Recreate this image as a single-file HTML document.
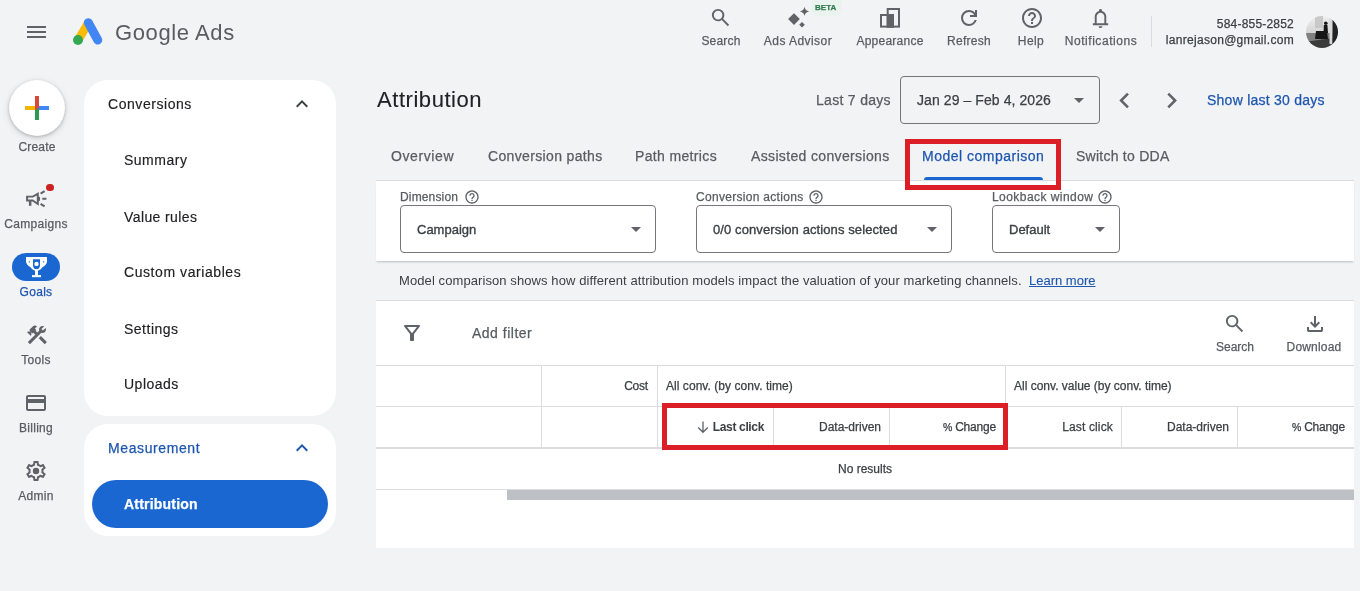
<!DOCTYPE html>
<html><head><meta charset="utf-8">
<style>
*{box-sizing:border-box;margin:0;padding:0}
html,body{width:1360px;height:591px;overflow:hidden;background:#f2f3f5;font-family:"Liberation Sans",sans-serif;}
.a{position:absolute}
.t{position:absolute;white-space:nowrap;line-height:1;will-change:transform;-webkit-text-stroke:.25px currentColor}
.f12{font-size:12px}.f13{font-size:13px}.f14{font-size:14px}.f22{font-size:22px}
.g{color:#585c60}.d{color:#3c4043}.k{color:#202124}.b{color:#1d56ae}
.c{text-align:center}.r{text-align:right}
.hl{position:absolute;background:#dadce0;height:1px}
.vl{position:absolute;background:#dadce0;width:1px}
.box{position:absolute;border:1px solid #79747e;border-radius:4px;background:#fff}
.tri{position:absolute;width:0;height:0;border-left:5px solid transparent;border-right:5px solid transparent;border-top:5px solid #5f6368}
.red{position:absolute;border:5px solid #dc1f26}
svg{position:absolute;overflow:visible}
</style></head><body>

<!-- ===== HEADER ===== -->
<div class="a" style="left:27px;top:26px;width:19px;height:2px;background:#5f6368"></div>
<div class="a" style="left:27px;top:31px;width:19px;height:2px;background:#5f6368"></div>
<div class="a" style="left:27px;top:36px;width:19px;height:2px;background:#5f6368"></div>
<svg style="left:72px;top:17px" width="32" height="29" viewBox="0 0 32 29">
  <line x1="6.5" y1="22.5" x2="16.3" y2="6" stroke="#fbbc04" stroke-width="8.5" stroke-linecap="round"/>
  <line x1="16.3" y1="5.7" x2="25.8" y2="23.1" stroke="#4285f4" stroke-width="9" stroke-linecap="round"/>
  <circle cx="6" cy="23" r="5" fill="#34a853"/>
</svg>
<div class="t f22 g" style="left:115px;top:21.5px;letter-spacing:.6px;-webkit-text-stroke:0">Google Ads</div>

<div class="t f12 g c" style="left:670.8px;top:34.8px;width:100px;letter-spacing:.2px">Search</div>
<div class="t f12 g c" style="left:748.3px;top:34.8px;width:100px;letter-spacing:.45px">Ads Advisor</div>
<div class="t f12 g c" style="left:839.9px;top:34.8px;width:100px;letter-spacing:.25px">Appearance</div>
<div class="t f12 g c" style="left:919.3px;top:34.8px;width:100px;letter-spacing:.25px">Refresh</div>
<div class="t f12 g c" style="left:981.3px;top:34.8px;width:100px;letter-spacing:.4px">Help</div>
<div class="t f12 g c" style="left:1051.3px;top:34.8px;width:100px;letter-spacing:.55px">Notifications</div>
<div class="a" style="left:812px;top:0;width:30px;height:16px;background:#ebf3ee;border-radius:0 0 6px 6px"></div>
<div class="t" style="left:815px;top:4.2px;font-size:8px;font-weight:bold;color:#2f7d4f;letter-spacing:.05px">BETA</div>
<div class="vl" style="left:1151px;top:16px;height:31px"></div>
<!-- header icons -->
<svg style="left:709.1px;top:6.1px" width="23" height="23" viewBox="0 0 24 24"><path fill="#5f6368" d="M19.6 21l-6.3-6.3q-.75.6-1.725.95T9.5 16q-2.725 0-4.612-1.888T3 9.5q0-2.725 1.888-4.612T9.5 3q2.725 0 4.612 1.888T16 9.5q0 1.1-.35 2.075T14.7 13.3l6.3 6.3-1.4 1.4ZM9.5 14q1.875 0 3.188-1.313T14 9.5q0-1.875-1.313-3.188T9.5 5Q7.625 5 6.312 6.313T5 9.5q0 1.875 1.313 3.188T9.5 14Z"/></svg>
<svg style="left:780px;top:0" width="40" height="30" viewBox="0 0 40 30"><path fill="#5f6368" d="M14 13.2L19.85 19 14 24.9 8.1 19Z M22 22l2.85 2.8L22 27.6 19.2 24.8Z M24.5 6.8Q25.1 10.8 29.2 11.4Q25.1 12 24.5 16Q23.9 12 19.8 11.4Q23.9 10.8 24.5 6.8Z"/></svg>
<svg style="left:878px;top:6px" width="24" height="24" viewBox="0 0 24 24"><rect x="3" y="9" width="12" height="11.6" fill="none" stroke="#5f6368" stroke-width="2"/><rect x="9.7" y="3" width="11.3" height="17.6" fill="none" stroke="#5f6368" stroke-width="2"/><rect x="8.7" y="8" width="7.3" height="13.6" fill="#5f6368"/></svg>
<svg style="left:957.4px;top:6px" width="24" height="24" viewBox="0 0 24 24"><path fill="#5f6368" d="M12 20q-3.35 0-5.675-2.325T4 12q0-3.35 2.325-5.675T12 4q1.725 0 3.3.712T18 6.75V4h2v7h-7V9h4.2q-.8-1.4-2.187-2.2T12 6Q9.5 6 7.75 7.75T6 12q0 2.5 1.75 4.25T12 18q1.925 0 3.475-1.1T17.65 14h2.1q-.7 2.65-2.85 4.325T12 20Z"/></svg>
<svg style="left:1019.5px;top:5.8px" width="24" height="24" viewBox="0 0 24 24"><path fill="#5f6368" d="M11 18h2v-2h-2v2zm1-16C6.48 2 2 6.48 2 12s4.48 10 10 10 10-4.48 10-10S17.52 2 12 2zm0 18c-4.41 0-8-3.59-8-8s3.59-8 8-8 8 3.590 8 8-3.59 8-8 8zm0-14c-2.21 0-4 1.79-4 4h2c0-1.1.9-2 2-2s2 .9 2 2c0 2-3 1.75-3 5h2c0-2.25 3-2.5 3-5 0-2.21-1.79-4-4-4z"/></svg>
<svg style="left:1089.2px;top:6.7px" width="23" height="23" viewBox="0 0 24 24"><path fill="#5f6368" d="M4 19v-2h2v-7q0-2.075 1.25-3.687T10.5 4.2v-.7q0-.625.438-1.062T12 2q.625 0 1.063.438T13.5 3.5v.7q2 .5 3.25 2.113T18 10v7h2v2Zm8-7.5ZM12 22q-.825 0-1.412-.587T10 20h4q0 .825-.587 1.413T12 22Zm-4-5h8v-7q0-1.65-1.175-2.825T12 6q-1.65 0-2.825 1.175T8 10Z"/></svg>
<svg style="left:1306px;top:16px" width="32" height="32" viewBox="0 0 32 32">
 <defs><clipPath id="av"><circle cx="16" cy="16" r="16"/></clipPath>
 <filter id="avb" x="-10%" y="-10%" width="120%" height="120%"><feGaussianBlur stdDeviation=".7"/></filter>
 <linearGradient id="avg" x1="0" y1="0" x2="0" y2="1"><stop offset="0" stop-color="#f2f2f2"/><stop offset=".55" stop-color="#d2d2d2"/><stop offset="1" stop-color="#909090"/></linearGradient></defs>
 <g clip-path="url(#av)"><g filter="url(#avb)">
  <rect x="-2" y="-2" width="36" height="36" fill="url(#avg)"/>
  <rect x="9" y="-2" width="8" height="14" fill="#c8c8c8"/>
  <rect x="-2" y="17" width="36" height="17" fill="#808080"/>
  <path d="M-2 26L34 21V34H-2Z" fill="#3a3a3a"/>
  <rect x="23.5" y="-2" width="3" height="30" fill="#d8d8d8"/>
  <rect x="26.5" y="4" width="8" height="26" fill="#222"/>
  <path d="M10 15h11l1 8H9z" fill="#161616"/>
  <path d="M17.8 9h3.6l.6 8h-4.4z" fill="#161616"/>
  <circle cx="19.8" cy="7.3" r="1.8" fill="#161616"/>
 </g></g>
</svg>

<div class="t f12 d r" style="left:1093.5px;top:18.3px;width:200px;letter-spacing:.2px">584-855-2852</div>
<div class="t f12 d r" style="left:1093.5px;top:34.3px;width:200px;letter-spacing:.3px">lanrejason@gmail.com</div>

<!-- ===== NAV RAIL ===== -->
<div class="a" style="left:9px;top:80px;width:56px;height:56px;border-radius:50%;background:#fff;box-shadow:0 1px 3px rgba(60,64,67,.3),0 2px 6px 1px rgba(60,64,67,.12)"></div>
<div class="t f12 g c" style="left:-13px;top:140.8px;width:100px;letter-spacing:.2px">Create</div>
<div class="t f12 g c" style="left:-14px;top:218.4px;width:100px;letter-spacing:.3px">Campaigns</div>
<div class="a" style="left:12px;top:253px;width:48px;height:28px;border-radius:14px;background:#1a67d2"></div>
<div class="t f12 c" style="left:-14px;top:286px;width:100px;color:#1d56ae;letter-spacing:.3px">Goals</div>
<div class="t f12 g c" style="left:-14px;top:354px;width:100px;letter-spacing:.3px">Tools</div>
<div class="t f12 g c" style="left:-14px;top:422px;width:100px;letter-spacing:.3px">Billing</div>
<div class="t f12 g c" style="left:-14px;top:490px;width:100px;letter-spacing:.3px">Admin</div>
<svg style="left:25px;top:96px" width="24" height="24" viewBox="0 0 24 24" shape-rendering="crispEdges">
 <rect x="10" y="0" width="4" height="12" fill="#d8473a"/>
 <rect x="0" y="10" width="12" height="4" fill="#f4b400"/>
 <rect x="12" y="10" width="12" height="4" fill="#4285f4"/>
 <rect x="10" y="12" width="4" height="12" fill="#2d9a53"/>
 <path d="M10 10H14V12H12V14H10Z" fill="#d8473a"/>
 <path d="M12 12H14V14H12Z" fill="#2d9a53"/>
</svg>
<svg style="left:24px;top:187px" width="24" height="24" viewBox="0 0 24 24">
 <path fill="#5f6368" fill-rule="evenodd" d="M2.1 8.7H8.5L14.8 4.9V18.8L8.5 14.5H2.1Z M4.1 10.6H9L12.8 8.4V15.3L9 12.6H4.1Z"/>
 <ellipse cx="14.9" cy="11.9" rx="1.2" ry="2.4" fill="#5f6368"/>
 <rect x="4.9" y="14" width="2.5" height="4.8" fill="#5f6368"/>
 <path fill="none" stroke="#5f6368" stroke-width="2.1" d="M16.6 6.6L20.6 4.2 M18.3 11.8H22.4 M16.6 16.8L20.6 19.3"/>
</svg>
<div class="a" style="left:46.1px;top:183.6px;width:7.8px;height:7.8px;border-radius:50%;background:#c9221f"></div>
<svg style="left:16px;top:252px" width="40" height="30" viewBox="0 0 40 30">
 <path fill="#fff" d="M10 4.9H31V10Q30.2 13.4 26.2 15.4Q24.6 18.4 20.5 18.7Q16.4 18.4 14.8 15.4Q10.8 13.4 10 10Z"/>
 <path fill="#1a67d2" d="M17 7.2H24V13.4Q23.7 17 20.5 17.2Q17.3 17 17 13.4Z"/>
 <circle cx="13.4" cy="9.9" r=".7" fill="#1a67d2"/><circle cx="27.6" cy="9.9" r=".7" fill="#1a67d2"/>
 <circle cx="20.5" cy="11.9" r="2.2" fill="#fff"/>
 <rect x="19" y="17" width="3" height="6.5" fill="#fff"/>
 <rect x="16" y="23.1" width="9" height="2.1" fill="#fff"/>
</svg>
<svg style="left:24.6px;top:323px" width="24" height="24" viewBox="0 0 24 24"><path fill="#5f6368" d="M13.783 15.172l2.121-2.121 5.996 5.996-2.121 2.121zM17.5 10c1.93 0 3.5-1.57 3.5-3.5 0-.58-.16-1.120-.41-1.6l-2.7 2.7-1.49-1.49 2.7-2.7c-.48-.25-1.02-.41-1.6-.41C15.57 3 14 4.57 14 6.5c0 .41.08.8.21 1.16l-1.85 1.85-1.78-1.78.71-.71-1.41-1.41L12 3.49c-1.17-1.17-3.07-1.17-4.24 0L4.22 7.03l1.41 1.41H2.81l-.71.71 3.54 3.54.71-.71V9.15l1.41 1.41.71-.71 1.78 1.78-7.41 7.41 2.12 2.12L16.34 9.790c.36.13.75.21 1.16.21z"/></svg>
<svg style="left:24px;top:391px" width="24" height="24" viewBox="0 0 24 24"><path fill="#5f6368" d="M20 4H4c-1.11 0-1.99.89-1.99 2L2 18c0 1.11.89 2 2 2h16c1.11 0 2-.89 2-2V6c0-1.11-.89-2-2-2zm0 14H4v-6h16v6zm0-10H4V6h16v2z"/></svg>
<svg style="left:24px;top:459px" width="24" height="24" viewBox="0 0 24 24"><path fill="#5f6368" d="M19.43 12.98c.04-.32.07-.64.07-.98 0-.34-.03-.66-.07-.98l2.11-1.65c.19-.15.24-.42.12-.64l-2-3.46c-.09-.16-.26-.25-.44-.25-.06 0-.12.01-.17.03l-2.49 1c-.52-.4-1.08-.73-1.69-.98l-.38-2.65C14.46 2.18 14.25 2 14 2h-4c-.25 0-.46.18-.49.42l-.38 2.65c-.61.25-1.17.59-1.69.98l-2.49-1c-.06-.02-.12-.03-.18-.03-.17 0-.34.09-.43.25l-2 3.46c-.13.22-.07.49.12.64l2.11 1.65c-.04.32-.07.65-.07.98 0 .33.03.66.07.98l-2.11 1.65c-.19.15-.24.42-.12.64l2 3.46c.09.16.26.25.44.25.06 0 .12-.01.17-.03l2.49-1c.52.4 1.08.73 1.69.98l.38 2.65c.03.24.24.42.49.42h4c.25 0 .46-.18.49-.42l.38-2.65c.61-.25 1.17-.59 1.690-.98l2.49 1c.06.02.12.03.18.03.17 0 .34-.09.43-.25l2-3.46c.12-.22.07-.49-.12-.64l-2.11-1.65zm-1.98-1.71c.04.31.05.52.05.73 0 .21-.02.43-.05.73l-.14 1.13.89.7 1.08.84-.7 1.21-1.27-.51-1.04-.42-.9.68c-.43.32-.84.56-1.25.73l-1.06.43-.16 1.13-.2 1.35h-1.4l-.19-1.35-.16-1.13-1.06-.43c-.43-.18-.83-.41-1.23-.71l-.91-.7-1.06.43-1.27.51-.7-1.21 1.08-.84.89-.7-.14-1.13c-.03-.31-.05-.54-.05-.74s.02-.43.05-.73l.14-1.13-.89-.7-1.08-.84.7-1.21 1.27.51 1.04.42.9-.68c.43-.32.84-.56 1.25-.73l1.06-.43.16-1.13.2-1.35h1.39l.19 1.350.16 1.13 1.06.43c.43.18.83.41 1.23.71l.91.7 1.06-.43 1.27-.51.7 1.21-1.07.85-.89.7.14 1.13z"/><circle cx="12" cy="12" r="3.2" fill="#5f6368"/></svg>


<!-- ===== SIDE CARDS ===== -->
<div class="a" style="left:84px;top:80px;width:252px;height:336px;background:#fff;border-radius:24px"></div>
<div class="a" style="left:84px;top:424px;width:252px;height:112px;background:#fff;border-radius:24px"></div>
<div class="a" style="left:92px;top:480px;width:236px;height:48px;background:#1a67d2;border-radius:24px"></div>

<svg style="left:290px;top:92px" width="24" height="24" viewBox="0 0 24 24"><path fill="#3c4043" d="M12 10.8l-4.6 4.6L6 14l6-6 6 6-1.4 1.4-4.6-4.6Z"/></svg>
<svg style="left:290px;top:436px" width="24" height="24" viewBox="0 0 24 24"><path fill="#1d56ae" d="M12 10.8l-4.6 4.6L6 14l6-6 6 6-1.4 1.4-4.6-4.6Z"/></svg>
<div class="t f14 k" style="left:107.6px;top:97px;letter-spacing:.55px;-webkit-text-stroke:.15px">Conversions</div>
<div class="t f14 k" style="left:123.6px;top:153px;letter-spacing:.5px;-webkit-text-stroke:.15px">Summary</div>
<div class="t f14 k" style="left:124px;top:209.5px;letter-spacing:.4px;-webkit-text-stroke:.15px">Value rules</div>
<div class="t f14 k" style="left:123.8px;top:265.3px;letter-spacing:.57px;-webkit-text-stroke:.15px">Custom variables</div>
<div class="t f14 k" style="left:123.6px;top:321.5px;letter-spacing:.5px;-webkit-text-stroke:.15px">Settings</div>
<div class="t f14 k" style="left:123.6px;top:377.3px;letter-spacing:.5px;-webkit-text-stroke:.15px">Uploads</div>
<div class="t f14" style="left:107.8px;top:441.3px;letter-spacing:.6px;color:#1d56ae">Measurement</div>
<div class="t f14" style="left:124.4px;top:497.2px;font-weight:bold;color:#fff;letter-spacing:.2px">Attribution</div>

<!-- ===== MAIN ===== -->
<div class="t f22" style="left:376.5px;top:89px;color:#202124;letter-spacing:.55px;-webkit-text-stroke:.1px">Attribution</div>
<div class="t f14 g" style="left:816.3px;top:93.3px;letter-spacing:.3px">Last 7 days</div>
<div class="box" style="left:900px;top:76px;width:200px;height:48px;background:transparent;border-color:#747775"></div>
<div class="t f14 d" style="left:916.5px;top:93.3px;letter-spacing:.08px">Jan 29 – Feb 4, 2026</div>
<div class="tri" style="left:1074px;top:98px"></div>

<svg style="left:1108.7px;top:84.7px" width="31" height="31" viewBox="0 0 24 24"><path fill="#5f6368" d="M14 18l-6-6 6-6 1.4 1.4-4.6 4.6 4.6 4.6L14 18Z"/></svg>
<svg style="left:1157.3px;top:84.7px" width="31" height="31" viewBox="0 0 24 24"><path fill="#5f6368" d="M12.6 12L8 7.4 9.4 6l6 6-6 6L8 16.6l4.6-4.6Z"/></svg>
<div class="t f14 b" style="left:1207px;top:93px;letter-spacing:.25px">Show last 30 days</div>

<div class="t f14 g" style="left:391.4px;top:149px;letter-spacing:.6px">Overview</div>
<div class="t f14 g" style="left:487.6px;top:149px;letter-spacing:.35px">Conversion paths</div>
<div class="t f14 g" style="left:635.4px;top:149px;letter-spacing:.35px">Path metrics</div>
<div class="t f14 g" style="left:750.5px;top:149px;letter-spacing:.35px">Assisted conversions</div>
<div class="t f14 b" style="left:921.7px;top:149px;letter-spacing:.5px">Model comparison</div>
<div class="t f14 g" style="left:1076.3px;top:149px;letter-spacing:.25px">Switch to DDA</div>

<div class="hl" style="left:376px;top:180px;width:978px"></div>
<div class="a" style="left:376px;top:181px;width:978px;height:80px;background:#fff;box-shadow:0 2px 2px -1px rgba(60,64,67,.3)"></div>
<div class="a" style="left:924px;top:177px;width:119px;height:3px;background:#1a67d2;border-radius:3px 3px 0 0"></div>
<div class="red" style="left:905px;top:139px;width:156px;height:51px"></div>

<div class="t f12 g" style="left:399.7px;top:191px;letter-spacing:.15px">Dimension</div>
<div class="t f12 g" style="left:696px;top:191px;letter-spacing:.3px">Conversion actions</div>
<div class="t f12 g" style="left:991.8px;top:191px;letter-spacing:.45px">Lookback window</div>
<svg style="left:463.8px;top:189px" width="16" height="16" viewBox="0 0 24 24"><path fill="#5f6368" d="M11 18h2v-2h-2v2zm1-16C6.48 2 2 6.48 2 12s4.48 10 10 10 10-4.48 10-10S17.52 2 12 2zm0 18c-4.41 0-8-3.59-8-8s3.59-8 8-8 8 3.59 8 8-3.59 8-8 8zm0-14c-2.21 0-4 1.79-4 4h2c0-1.1.9-2 2-2s2 .9 2 2c0 2-3 1.75-3 5h2c0-2.25 3-2.5 3-5 0-2.21-1.79-4-4-4z"/></svg>
<svg style="left:807.9px;top:189px" width="16" height="16" viewBox="0 0 24 24"><path fill="#5f6368" d="M11 18h2v-2h-2v2zm1-16C6.48 2 2 6.48 2 12s4.48 10 10 10 10-4.48 10-10S17.52 2 12 2zm0 18c-4.41 0-8-3.59-8-8s3.59-8 8-8 8 3.59 8 8-3.59 8-8 8zm0-14c-2.21 0-4 1.79-4 4h2c0-1.1.9-2 2-2s2 .9 2 2c0 2-3 1.75-3 5h2c0-2.25 3-2.5 3-5 0-2.21-1.79-4-4-4z"/></svg>
<svg style="left:1096.7px;top:189px" width="16" height="16" viewBox="0 0 24 24"><path fill="#5f6368" d="M11 18h2v-2h-2v2zm1-16C6.48 2 2 6.48 2 12s4.48 10 10 10 10-4.48 10-10S17.52 2 12 2zm0 18c-4.41 0-8-3.59-8-8s3.59-8 8-8 8 3.59 8 8-3.59 8-8 8zm0-14c-2.21 0-4 1.79-4 4h2c0-1.1.9-2 2-2s2 .9 2 2c0 2-3 1.75-3 5h2c0-2.25 3-2.5 3-5 0-2.21-1.79-4-4-4z"/></svg>
<div class="box" style="left:400px;top:205px;width:256px;height:48px"></div>
<div class="box" style="left:696px;top:205px;width:256px;height:48px"></div>
<div class="box" style="left:992px;top:205px;width:128px;height:48px"></div>
<div class="t f13 d" style="left:416.6px;top:223.4px;-webkit-text-stroke:.35px">Campaign</div>
<div class="t f13 d" style="left:712.6px;top:223.4px;letter-spacing:.1px;-webkit-text-stroke:.35px">0/0 conversion actions selected</div>
<div class="t f13 d" style="left:1008.8px;top:223.4px;-webkit-text-stroke:.35px">Default</div>
<div class="tri" style="left:630.5px;top:227px"></div>
<div class="tri" style="left:926.5px;top:227px"></div>
<div class="tri" style="left:1094.5px;top:227px"></div>

<div class="t f13 d" style="left:399.3px;top:273.6px;letter-spacing:.09px;-webkit-text-stroke:0">Model comparison shows how different attribution models impact the valuation of your marketing channels.</div>
<div class="t f13 b" style="left:1029px;top:273.6px;text-decoration:underline;-webkit-text-stroke:.1px">Learn more</div>

<div class="a" style="left:376px;top:300px;width:978px;height:248px;background:#fff;border-top:1px solid #dadce0"></div>

<svg style="left:400px;top:321px" width="24" height="24" viewBox="0 0 24 24"><path fill="#5f6368" d="M11 20q-.425 0-.712-.288T10 19v-6L4.2 5.6q-.375-.5-.112-1.05T5 4h14q.65 0 .913.55T19.8 5.6L14 13v6q0 .425-.288.713T13 20h-2Zm1-7.7L16.95 6h-9.9L12 12.3Zm0 0Z"/></svg>
<svg style="left:1223px;top:312.3px" width="23" height="23" viewBox="0 0 24 24"><path fill="#5f6368" d="M19.6 21l-6.3-6.3q-.75.6-1.725.95T9.5 16q-2.725 0-4.612-1.888T3 9.5q0-2.725 1.888-4.612T9.5 3q2.725 0 4.612 1.888T16 9.5q0 1.1-.35 2.075T14.7 13.3l6.3 6.3-1.4 1.4ZM9.5 14q1.875 0 3.188-1.313T14 9.5q0-1.875-1.313-3.188T9.5 5Q7.625 5 6.312 6.313T5 9.5q0 1.875 1.313 3.188T9.5 14Z"/></svg>
<svg style="left:1302.5px;top:312px" width="24" height="24" viewBox="0 0 24 24"><path fill="#5f6368" d="M12 16l-5-5 1.4-1.45 2.6 2.6V4h2v8.15l2.6-2.6L17 11l-5 5Zm-6 4q-.825 0-1.412-.587T4 18v-3h2v3h12v-3h2v3q0 .825-.587 1.413T18 20H6Z"/></svg>
<svg style="left:696.5px;top:421px" width="12" height="12" viewBox="0 0 12 12"><path fill="none" stroke="#5f6368" stroke-width="1.3" d="M6 0.6V11 M1.2 6.5L6 11.3 10.8 6.5"/></svg>
<div class="t f14 g" style="left:472px;top:326px;letter-spacing:.5px">Add filter</div>
<div class="t f12 g c" style="left:1184.7px;top:341px;width:100px">Search</div>
<div class="t f12 g c" style="left:1264.1px;top:341px;width:100px;letter-spacing:.2px">Download</div>

<div class="hl" style="left:376px;top:365px;width:978px"></div>
<div class="hl" style="left:376px;top:406px;width:978px"></div>
<div class="hl" style="left:376px;top:447px;width:978px;height:2px"></div>
<div class="vl" style="left:541px;top:366px;height:81px"></div>
<div class="vl" style="left:657px;top:366px;height:81px"></div>
<div class="vl" style="left:1005px;top:366px;height:81px"></div>
<div class="vl" style="left:773px;top:407px;height:40px"></div>
<div class="vl" style="left:889px;top:407px;height:40px"></div>
<div class="vl" style="left:1121px;top:407px;height:40px"></div>
<div class="vl" style="left:1237px;top:407px;height:40px"></div>

<div class="t f12 d r" style="left:448px;top:380.2px;width:200px;letter-spacing:-.2px">Cost</div>
<div class="t f12 d" style="left:665.6px;top:380.2px;letter-spacing:.05px">All conv. (by conv. time)</div>
<div class="t f12 d" style="left:1014px;top:380.2px">All conv. value (by conv. time)</div>
<div class="t f12 d r" style="left:564px;top:421.1px;width:200px;font-weight:bold;letter-spacing:-.35px;-webkit-text-stroke:0">Last click</div>
<div class="t f12 d r" style="left:681px;top:421.1px;width:200px">Data-driven</div>
<div class="t f12 d r" style="left:796.3px;top:421.1px;width:200px;letter-spacing:-.2px"><span style="font-size:10.5px">%</span> Change</div>
<div class="t f12 d r" style="left:912.5px;top:421.1px;width:200px;letter-spacing:.15px">Last click</div>
<div class="t f12 d r" style="left:1029px;top:421.1px;width:200px">Data-driven</div>
<div class="t f12 d r" style="left:1145.3px;top:421.1px;width:200px;letter-spacing:-.2px"><span style="font-size:10.5px">%</span> Change</div>
<div class="red" style="left:662px;top:403px;width:346px;height:47px"></div>

<div class="t f12 d c" style="left:815px;top:462.8px;width:100px">No results</div>
<div class="hl" style="left:376px;top:489px;width:978px"></div>
<div class="a" style="left:507px;top:490px;width:847px;height:10px;background:#bdc1c6"></div>

</body></html>
